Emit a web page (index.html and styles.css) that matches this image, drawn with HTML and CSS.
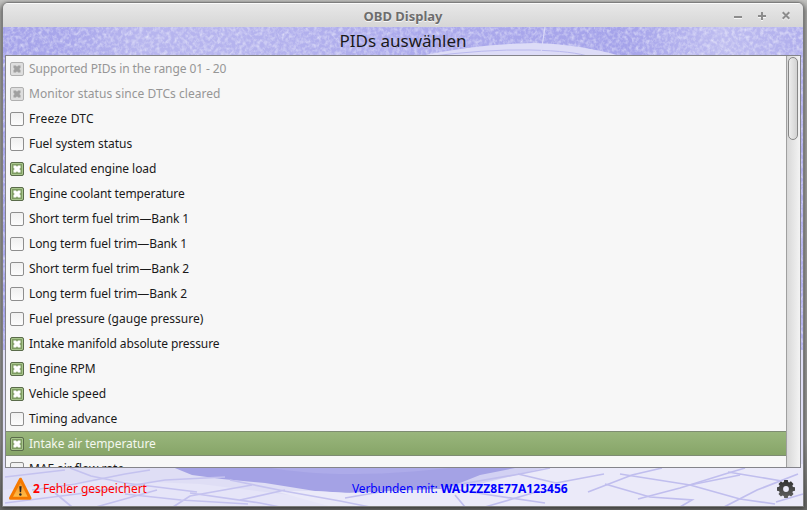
FILE: index.html
```html
<!DOCTYPE html>
<html lang="de">
<head>
<meta charset="utf-8">
<title>OBD Display</title>
<link rel="stylesheet" href="styles.css">
</head>
<body>
<svg class="defs" width="0" height="0">
  <symbol id="cross" viewBox="0 0 14 14"><path d="M3.5 3.5H6l1 1.3 1-1.3h2.500V6L9.200 7l1.300 1v2.500H8L7 9.200l-1 1.300H3.500V8l1.300-1-1.300-1z" fill="currentColor"/></symbol>
</svg>
<div class="window">
  <header class="titlebar">
    <span class="title">OBD Display</span>
    <div class="controls">
      <svg width="8" height="9" viewBox="0 0 8 9"><path d="M0 6h8" class="mark"/></svg>
      <svg width="8" height="9" viewBox="0 0 8 9"><path d="M0 5h8M4 1v8" class="mark"/></svg>
      <svg width="8" height="9" viewBox="0 0 8 9"><path d="M.7 1.2l6.6 6.6M7.3 1.2L.7 7.8" class="mark"/></svg>
    </div>
  </header>
  <div class="content">
    <svg class="backdrop" width="800" height="480" viewBox="3 27 800 480">
      <defs>
        <filter id="foliage" x="0" y="0" width="1" height="1" color-interpolation-filters="sRGB">
          <feTurbulence type="fractalNoise" baseFrequency=".28 .25" numOctaves="4" seed="12"/>
          <feColorMatrix values="0 0 0 0 .93  0 0 0 0 .93  0 0 0 0 .99  1.2 1 0 0 -.9"/>
        </filter>
        <linearGradient id="glow"><stop offset="0" stop-color="#fff" stop-opacity="0"/><stop offset=".08" stop-color="#fff" stop-opacity=".04"/><stop offset=".17" stop-color="#fff" stop-opacity=".2"/><stop offset=".3" stop-color="#fff" stop-opacity=".18"/><stop offset=".5" stop-color="#fff" stop-opacity=".08"/><stop offset=".78" stop-color="#fff" stop-opacity="0"/><stop offset=".9" stop-color="#fff" stop-opacity=".28"/><stop offset="1" stop-color="#fff" stop-opacity=".12"/></linearGradient>
        <filter id="soft"><feGaussianBlur stdDeviation=".7"/></filter>
      </defs>
      <rect x="3" y="27" width="800" height="480" fill="#a5a3ea"/>
      <rect x="3" y="27" width="800" height="330" filter="url(#foliage)" opacity=".75"/>
      <rect x="3" y="27" width="800" height="330" fill="url(#glow)"/>
      <g filter="url(#soft)">
        <path d="M415 57Q475 44 535 43Q580 44 625 57z" fill="#dddcf7"/>
        <path d="M425 57Q485 49 530 50T590 57" fill="none" stroke="#bab9ee"/>
        <path d="M545 27L541 53" stroke="#dcdbf8"/>
        <path d="M0 350H806V510H0z" fill="#dfdef5"/>
        <path d="M3 507V490L100 480L200 484L330 500V507z" fill="#e6e5f8"/>
        <path d="M165 464L192 475L222 479L265 483L315 491L345 493L440 489L480 482L535 464z" fill="#a4a2e5"/>
        <path d="M250 464Q340 484 480 464z" fill="#adabe9"/>
        <path d="M332 507L275 491L315 491L350 493L440 489L480 482L535 464H806V510z" fill="#ebeaf9"/>
        <path d="M440 491L480 475L535 464H560L480 484z" fill="#d2d1f3"/>
        <g fill="none" stroke="#c4c2ef" stroke-width="1.7">
          <path d="M5 477L65 470M32 490L75 484L125 474L150 470M5 503L85 493L165 480L225 477M125 494L181 500L248 504M96 507L157 490M173 507L190 496L252 485"/>
          <path d="M70 468L91 476L125 483L197 492M55 493L72 507M190 493L260 503L280 507M230 480L284 491L340 501L370 507M240 500L285 490"/>
        </g>
        <g fill="none" stroke="#c0beee" stroke-width="1.7">
          <path d="M345 498L380 492M455 485L520 474L550 468M485 507L536 492M588 492L632 475L662 468M638 499L680 488L725 474L745 468M724 507L757 490L798 474M776 502L803 494"/>
          <path d="M440 487L490 495L545 503M518 474L556 483M556 483L604 474M620 474L690 485L740 475M605 484L650 497L692 500L680 507M690 485L740 499L775 504M728 472L782 481M455 495L465 507"/>
        </g>
      </g>
    </svg>
    <h1>PIDs auswählen</h1>
    <div class="frame">
      <ul class="list">
        <li class="disabled tight"><i><svg><use href="#cross"/></svg></i>Supported PIDs in the range 01 - 20</li>
        <li class="disabled loose"><i><svg><use href="#cross"/></svg></i>Monitor status since DTCs cleared</li>
        <li class="wide"><i></i>Freeze DTC</li>
        <li class="snug"><i></i>Fuel system status</li>
        <li class="checked snug"><i><svg><use href="#cross"/></svg></i>Calculated engine load</li>
        <li class="checked tight"><i><svg><use href="#cross"/></svg></i>Engine coolant temperature</li>
        <li class="tight"><i></i>Short term fuel trim—Bank 1</li>
        <li class="tight"><i></i>Long term fuel trim—Bank 1</li>
        <li class="tight"><i></i>Short term fuel trim—Bank 2</li>
        <li class="tight"><i></i>Long term fuel trim—Bank 2</li>
        <li><i></i>Fuel pressure (gauge pressure)</li>
        <li class="checked tight"><i><svg><use href="#cross"/></svg></i>Intake manifold absolute pressure</li>
        <li class="checked tight"><i><svg><use href="#cross"/></svg></i>Engine RPM</li>
        <li class="checked"><i><svg><use href="#cross"/></svg></i>Vehicle speed</li>
        <li class="snug"><i></i>Timing advance</li>
        <li class="checked selected snug"><i><svg><use href="#cross"/></svg></i>Intake air temperature</li>
        <li><i></i>MAF air flow rate</li>
      </ul>
      <div class="scrollbar"><div class="thumb"></div></div>
    </div>
    <footer>
      <div class="errors">
        <svg width="24" height="24" viewBox="0 0 24 24"><defs><linearGradient id="warn" x2="0" y2="1"><stop offset="0" stop-color="#f58a24"/><stop offset="1" stop-color="#ffc04a"/></linearGradient></defs><path d="M11.5 2.200L21 21.200H1.500z" fill="url(#warn)" stroke="#f57900" stroke-width="3" stroke-linejoin="round"/><path d="M10.300 9.300h2.300l-.5 6h-1.300z" fill="#222"/><circle cx="11.400" cy="17.500" r="1.200" fill="#222"/></svg>
        <span><b>2</b> Fehler gespeichert</span>
      </div>
      <div class="status">Verbunden mit: <b>WAUZZZ8E77A123456</b></div>
      <svg class="gear" width="18" height="18" viewBox="-9 -9 18 18"><defs><linearGradient id="steel" x2="0" y2="1"><stop offset="0" stop-color="#303030"/><stop offset="1" stop-color="#606060"/></linearGradient></defs><path fill="url(#steel)" fill-rule="evenodd" d="M-1.8-9h3.6l.4 2 1 .4 1.7-1.1L7.5-5.1 6.4-3.4l.5 1.3L9-1.8v3.6l-2.1.4-.5 1 1.1 1.9L5.1 7.5 3.4 6.4l-1.2.5L1.8 9h-3.6l-.4-2.1-1.2-.5-1.7 1.1L-7.5 5.1-6.4 3.4l-.5-1.2L-9 1.8v-3.6l2.1-.4.5-1.2-1.1-1.7L-5.1-7.5-3.4-6.4l1.2-.5zM0-2.9A2.9 2.9 0 1 0 0 2.9A2.9 2.9 0 1 0 0-2.9"/></svg>
    </footer>
  </div>
</div>
</body>
</html>
```

FILE: styles.css
```css
* { box-sizing: border-box; }
html { height: 100%; }
body {
  margin: 0;
  height: 510px;
  overflow: hidden;
  padding: 2px 3px 3px 2px;
  background: linear-gradient(#c2c2c0, #a5a5a3 12px, #949492 440px, #686866 508px);
  font: 12px/25px "Noto Sans", sans-serif;
  color: #1a1a1a;
}
.defs { position: absolute; }
.window {
  height: 505px;
  border: 1px solid #7d7d7d;
  border-radius: 6px 6px 0 0;
  overflow: hidden;
  box-shadow: 0 1px 4px rgba(0, 0, 0, .55);
}
.titlebar {
  position: relative;
  height: 24px;
  display: flex;
  align-items: center;
  justify-content: center;
  background: linear-gradient(#e7e7e7, #d6d6d6);
  border-top: 1px solid #fafafa;
}
.title {
  margin-top: 2px;
  font-size: 13px;
  font-weight: 700;
  color: #6d6d6d;
  text-shadow: 0 1px #f6f6f6;
}
.controls {
  position: absolute;
  right: 13px;
  top: 7px;
  display: flex;
  gap: 16px;
}
.controls svg { display: block; filter: drop-shadow(0 1px 0 #f6f6f6); }
.mark { stroke: #8c8c8c; stroke-width: 2; fill: none; }
.content {
  position: relative;
  height: 479px;
  padding: 0 2px;
  display: flex;
  flex-direction: column;
}
.backdrop { position: absolute; left: 0; top: 0; }
h1 {
  position: relative;
  margin: 0;
  height: 28px;
  font-size: 17px;
  line-height: 28px;
  font-weight: 400;
  text-align: center;
}
.frame {
  position: relative;
  height: 413px;
  border: 1px solid #84848a;
  background: #f7f7f7;
  display: flex;
  overflow: hidden;
}
.list { flex: 1; margin: 0; padding: 0; list-style: none; }
.list li {
  height: 25px;
  padding: 0 4px;
  display: flex;
  align-items: center;
  gap: 5px;
  white-space: pre;
}
.list .tight { letter-spacing: -.09px; }
.list .snug { letter-spacing: -.05px; }
.list .loose { letter-spacing: .04px; }
.list .wide { letter-spacing: .25px; }
.list i {
  width: 14px;
  height: 14px;
  margin-top: 1px;
  border: 1px solid #8e8e8e;
  border-radius: 2px;
  background: linear-gradient(#f0f0f0, #fcfcfc);
}
.list i svg { display: block; width: 14px; height: 14px; margin: -1px; }
.list .checked i { background: #7f9d63; border-color: #5a6b4a; color: #fff; box-shadow: inset 0 0 0 1px #a9c78e; }
.list .disabled { color: #969696; }
.list .disabled i { background: #dedede; border-color: #b0b0b0; color: #a0a0a0; }
.list .selected {
  color: #f4f8ef;
  background: linear-gradient(#99b67c, #87a568);
  border-top: 1px solid #7e8c72;
  border-bottom: 1px solid #7e8c72;
}
.scrollbar {
  width: 14px;
  padding: 1px;
  border-left: 1px solid #a0a0a0;
  background: linear-gradient(90deg, #d8d8d8, #f3f3f3);
}
.thumb {
  width: 10px;
  height: 83px;
  border: 1px solid #878787;
  border-radius: 5px;
  background: linear-gradient(90deg, #ededed, #d2d2d2);
}
footer {
  position: relative;
  flex: 1;
  display: flex;
  align-items: center;
  padding: 3px 6px 0 4px;
}
.errors { width: 343px; display: flex; align-items: center; color: #f00; }
.errors span { letter-spacing: -.04px; }
.status { color: #00f; letter-spacing: -.13px; }
.status b { letter-spacing: .06px; }
.gear { margin-left: auto; }
```
